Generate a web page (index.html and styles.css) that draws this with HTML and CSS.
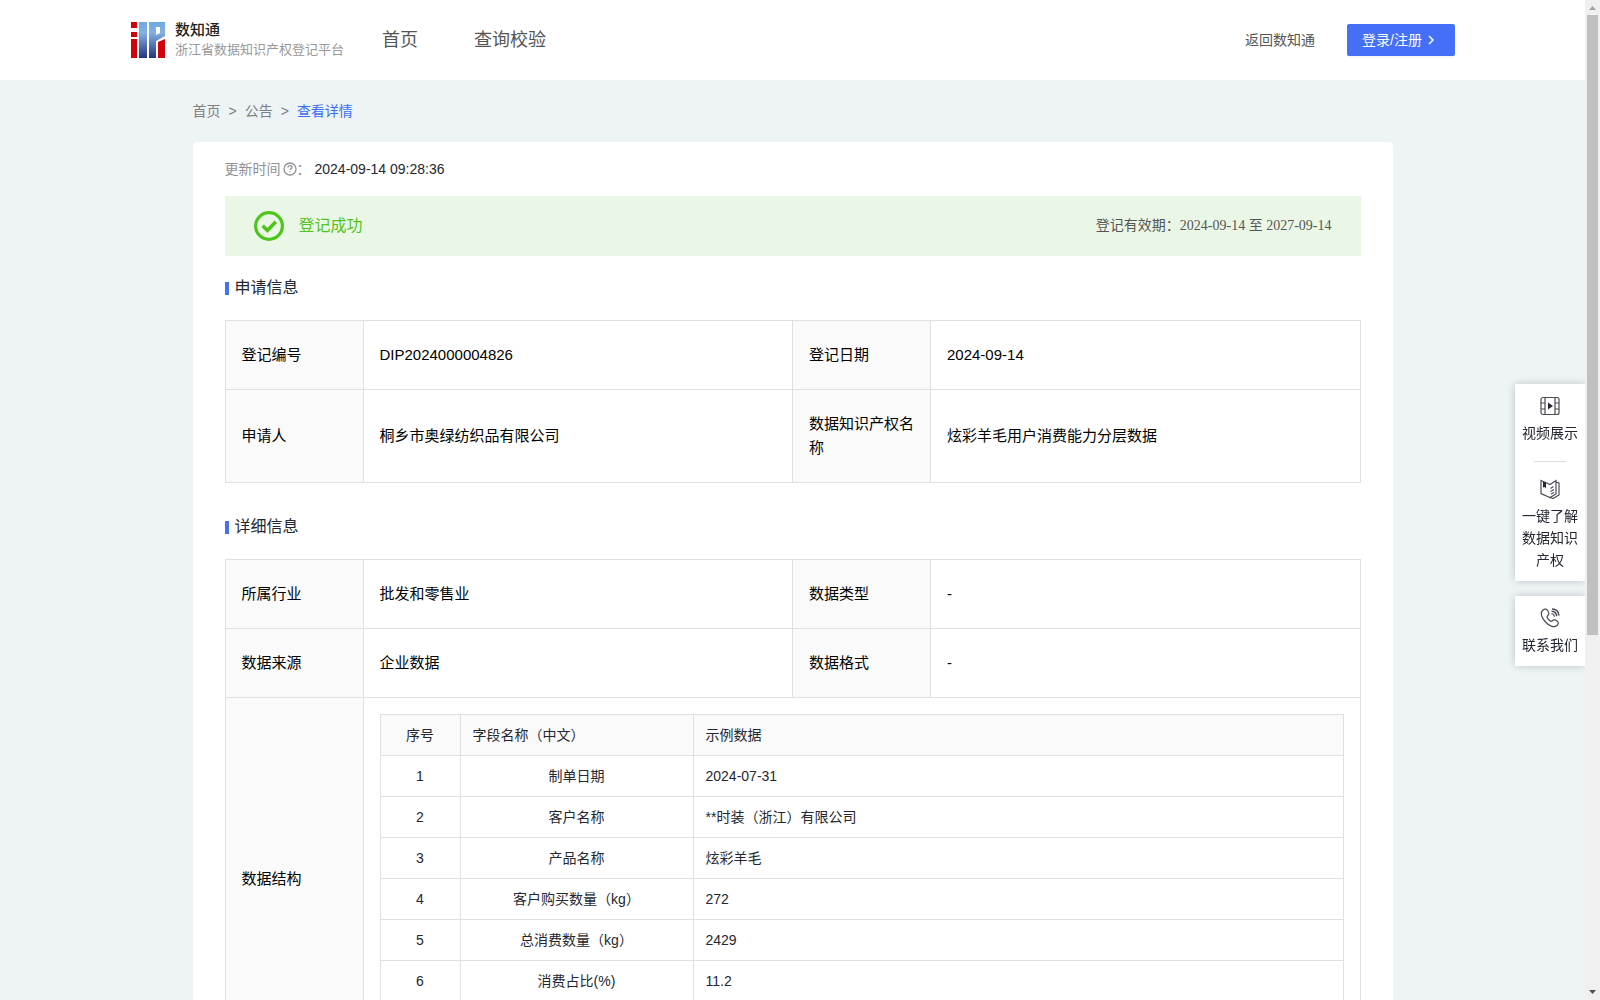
FILE: index.html
```html
<!DOCTYPE html>
<html lang="zh-CN">
<head>
    <meta charset="UTF-8">
    <meta name="viewport" content="width=device-width, initial-scale=1">
    <title>浙江省数据知识产权登记平台</title>
    <link rel="stylesheet" href="styles.css">
</head>
<body>
    <div class="page">
        <header class="header">
            <a class="logo" href="#">
                <svg class="logo-icon" viewBox="0 0 34 36" aria-hidden="true">
                    <defs>
                        <linearGradient id="blue" x1="0" y1="0" x2="0" y2="36" gradientUnits="userSpaceOnUse">
                            <stop offset="0" stop-color="#6fa8e0"/>
                            <stop offset="0.3" stop-color="#82b0e6"/>
                            <stop offset="1" stop-color="#22357f"/>
                        </linearGradient>
                    </defs>
                    <path fill="#d0020b" d="M0 0h6v6H0zM0 10h6v5H0zM0 17h6v19H0z"/>
                    <path fill="#d0020b" d="M27 20l7-3v19h-7z"/>
                    <path fill="url(#blue)" d="M8 0h8v36H8z"/>
                    <path fill="url(#blue)" fill-rule="evenodd" d="M18 0h16v14l-9 5v17h-7zM25 5v8l4-2V5z"/>
                </svg>
                <span class="logo-text">
                    <strong>数知通</strong>
                    <span>浙江省数据知识产权登记平台</span>
                </span>
            </a>
            <nav class="nav">
                <a href="#">首页</a>
                <a href="#">查询校验</a>
            </nav>
            <div class="header-right">
                <a class="back" href="#">返回数知通</a>
                <button class="login" type="button">登录/注册
                    <svg viewBox="0 0 8 10" aria-hidden="true"><path d="M2 1l4 4-4 4"/></svg>
                </button>
            </div>
        </header>

        <main class="container">
            <nav class="breadcrumb">
                <a href="#">首页</a><span class="sep">&gt;</span><a href="#">公告</a><span class="sep">&gt;</span><a class="active" href="#">查看详情</a>
            </nav>

            <div class="card">
                <div class="update">
                    <span>更新时间</span>
                    <svg viewBox="0 0 14 14" aria-hidden="true">
                        <circle cx="7" cy="7" r="6"/>
                        <path d="M5 5.6c0-1.2.9-1.9 2-1.9s2 .7 2 1.7c0 1.3-2 1.4-2 2.7M7 9.4v1.1"/>
                    </svg>
                    <span class="colon">：</span>
                    <span class="update-time">2024-09-14 09:28:36</span>
                </div>

                <div class="banner">
                    <svg viewBox="0 0 30 30" aria-hidden="true">
                        <circle cx="15" cy="15" r="13.4" stroke-width="3.2"/>
                        <path d="M8.600 14.800l4.800 4.600 8.400-8.600" stroke-width="3.600"/>
                    </svg>
                    <span class="banner-status">登记成功</span>
                    <span class="banner-date">登记有效期：2024-09-14 至 2027-09-14</span>
                </div>

                <h2 class="title">申请信息</h2>
                <table class="info">
                    <tr>
                        <th>登记编号</th>
                        <td>DIP2024000004826</td>
                        <th>登记日期</th>
                        <td>2024-09-14</td>
                    </tr>
                    <tr>
                        <th>申请人</th>
                        <td>桐乡市奥绿纺织品有限公司</td>
                        <th>数据知识产权名称</th>
                        <td>炫彩羊毛用户消费能力分层数据</td>
                    </tr>
                </table>

                <h2 class="title">详细信息</h2>
                <table class="info">
                    <tr>
                        <th>所属行业</th>
                        <td>批发和零售业</td>
                        <th>数据类型</th>
                        <td>-</td>
                    </tr>
                    <tr>
                        <th>数据来源</th>
                        <td>企业数据</td>
                        <th>数据格式</th>
                        <td>-</td>
                    </tr>
                    <tr>
                        <th>数据结构</th>
                        <td class="nested" colspan="3">
                            <table class="fields">
                                <thead>
                                    <tr><th class="no">序号</th><th class="name">字段名称（中文）</th><th>示例数据</th></tr>
                                </thead>
                                <tbody>
                                    <tr><td>1</td><td>制单日期</td><td>2024-07-31</td></tr>
                                    <tr><td>2</td><td>客户名称</td><td>**时装（浙江）有限公司</td></tr>
                                    <tr><td>3</td><td>产品名称</td><td>炫彩羊毛</td></tr>
                                    <tr><td>4</td><td>客户购买数量（kg）</td><td>272</td></tr>
                                    <tr><td>5</td><td>总消费数量（kg）</td><td>2429</td></tr>
                                    <tr><td>6</td><td>消费占比(%)</td><td>11.2</td></tr>
                                    <tr><td>7</td><td>-</td><td>-</td></tr>
                                </tbody>
                            </table>
                        </td>
                    </tr>
                </table>
            </div>
        </main>

        <aside class="side">
            <div class="side-box">
                <a href="#">
                    <svg viewBox="0 0 20 20" aria-hidden="true">
                        <rect x="1" y="1.5" width="18" height="17" rx="2"/>
                        <path d="M5 1.5v17M15 1.5v17M1 7h4M1 13h4M15 7h4M15 13h4"/>
                        <path class="solid" d="M8 6.5l5 3.5-5 3.5z"/>
                    </svg>
                    视频展示
                </a>
                <hr>
                <a href="#">
                    <svg viewBox="0 0 20 20" aria-hidden="true">
                        <path d="M1 1.5l9 4 6-4v13.5l-6 3.5-9-4zM10 18.5l3 1 6-3.5V4l-3-1M10.5 9.5l3-2M10.5 12.5l3.500-2M11 15l3-1.500"/>
                        <path class="solid" d="M3 2.500l3 1.300v5.500L4.500 8 3 8.500z"/>
                    </svg>
                    一键了解数据知识产权
                </a>
            </div>
            <div class="side-box">
                <a href="#">
                    <svg viewBox="0 0 20 20" aria-hidden="true">
                        <path d="M3 2C5 .5 7 1 8 3s1.500 3-.5 5c-1 1-.5 2 1 3.500s2.500 2.500 3.500 1.500c1.500-1.500 3-1.500 5 0s1.500 3 0 4.500c-2.500 2.500-7.500 1-11.500-3.500S0 5 3 2zM11.500 5.500c1.800.3 2.800 1.500 3 3.200"/>
                        <path class="wave" d="M11.500 3.200c3 .2 5 2.200 5.300 5M12 1c4 .2 6.700 2.900 7 6.500"/>
                    </svg>
                    联系我们
                </a>
            </div>
        </aside>
    </div>

    <div class="scrollbar" aria-hidden="true">
        <svg viewBox="0 0 15 15"><path fill="#a3a3a3" d="M4 10l3.500-4 3.500 4z"/></svg>
        <div class="thumb"></div>
        <svg viewBox="0 0 15 15"><path fill="#505050" d="M4 5l3.500 4L11 5z"/></svg>
    </div>
</body>
</html>
```

FILE: styles.css
```css
* {
    box-sizing: border-box;
}
body {
    display: flex;
    height: 100vh;
    margin: 0;
    background: #eef3f6;
    color: #242731;
    font-family: "Liberation Sans", "Noto Sans CJK SC", sans-serif;
    font-size: 14px;
    line-height: 22px;
}
a {
    color: inherit;
    text-decoration: none;
}
.page {
    flex: 1;
    overflow-y: auto;
    scrollbar-width: none;
}

/* header */
.header {
    display: flex;
    align-items: center;
    height: 80px;
    padding: 0 130px;
    background: #fff;
    color: #555;
}
.logo {
    display: flex;
    align-items: center;
    gap: 9px;
}
.logo-icon {
    width: 36px;
    height: 36px;
}
.logo-text {
    display: flex;
    flex-direction: column;
    color: #999;
    font-size: 13px;
    line-height: 20px;
}
.logo-text strong {
    color: #222;
    font-size: 15px;
    font-weight: 500;
}
.nav {
    display: flex;
    gap: 56px;
    margin-left: 38px;
    font-size: 18px;
}
.header-right {
    display: flex;
    align-items: center;
    gap: 32px;
    margin-left: auto;
}
.login {
    display: flex;
    align-items: center;
    gap: 5px;
    width: 108px;
    height: 32px;
    padding: 0 15px;
    border: none;
    border-radius: 2px;
    background: #446ff6;
    box-shadow: 0 2px 0 rgba(0, 0, 0, 0.04);
    color: #fff;
    font: inherit;
    white-space: nowrap;
    cursor: pointer;
}
.login svg {
    width: 8px;
    height: 10px;
    fill: none;
    stroke: #fff;
    stroke-width: 1.5;
}

/* content */
.container {
    max-width: 1200px;
    margin: 0 auto;
}
.breadcrumb {
    color: #808080;
    line-height: 62px;
}
.breadcrumb .sep {
    margin: 0 8px;
}
.breadcrumb .active {
    color: #3b6cf6;
}
.card {
    padding: 16px 32px 32px;
    border-radius: 4px;
    background: #fff;
}
.update {
    display: flex;
    align-items: center;
    margin-bottom: 16px;
    color: #8f9197;
}
.update svg {
    width: 14px;
    height: 14px;
    margin-left: 2px;
    fill: none;
    stroke: #8f9197;
    stroke-width: 1.3;
}
.update-time {
    margin-left: 4px;
    color: #242731;
}
.banner {
    display: flex;
    align-items: center;
    height: 60px;
    padding: 0 29px;
    background: #ebf7e6;
}
.banner svg {
    width: 30px;
    height: 30px;
    margin-right: 15px;
    fill: none;
    stroke: #4ec51c;
}
.banner-status {
    color: #52c41a;
    font-size: 16px;
}
.banner-date {
    margin-left: auto;
    color: #555;
    font-family: "Liberation Serif", "Noto Sans CJK SC", serif;
}
.title {
    display: flex;
    align-items: center;
    gap: 6px;
    margin: 20px 0;
    font-size: 16px;
    font-weight: 400;
    line-height: 24px;
}
.title::before {
    content: "";
    width: 4px;
    height: 13px;
    background: #446ff6;
}

/* tables */
table {
    width: 100%;
    border-collapse: collapse;
    table-layout: fixed;
}
th,
td {
    border: 1px solid #e0e0e0;
    font-weight: 400;
    text-align: left;
}
th {
    background: #fafafa;
}
.info {
    margin-bottom: 32px;
    color: #000;
    font-size: 15px;
    line-height: 24px;
}
.info th,
.info td {
    padding: 22px 16px;
}
.info th {
    width: 138px;
}
.info .nested {
    padding: 16px;
}
.fields {
    color: #242731;
    font-size: 14px;
    line-height: 22px;
}
.info .fields th,
.info .fields td {
    padding: 9px 12px;
}
.info .fields th {
    width: auto;
}
.info .fields .no {
    width: 80px;
    text-align: center;
}
.info .fields .name {
    width: 233px;
}
.fields td:first-child,
.fields td:nth-child(2) {
    text-align: center;
}

/* floating entries on the right */
.side {
    position: fixed;
    top: 384px;
    right: 15px;
    display: flex;
    flex-direction: column;
    gap: 15px;
    width: 70px;
}
.side-box {
    padding: 12px 6px 10px;
    background: #fff;
    box-shadow: 0 0 8px rgba(0, 0, 0, 0.2);
    text-align: center;
}
.side-box a {
    display: block;
}
.side-box svg {
    display: block;
    width: 20px;
    height: 20px;
    margin: 0 auto 6px;
    fill: none;
    stroke: #4a4c55;
    stroke-width: 1.2;
}
.side-box .solid {
    fill: #242731;
    stroke: none;
}
.side-box .wave {
    stroke-width: 1.5;
}
.side-box hr {
    width: 32px;
    height: 1px;
    margin: 17px auto;
    border: none;
    background: #ddd;
}

/* scrollbar */
.scrollbar {
    position: relative;
    z-index: 1;
    display: flex;
    flex-direction: column;
    width: 15px;
    background: #f0f0f0;
}
.scrollbar svg {
    flex: none;
    width: 15px;
    height: 15px;
}
.scrollbar .thumb {
    width: 11px;
    height: 62%;
    margin: 0 2px auto;
    background: #c0c0c0;
}
```
